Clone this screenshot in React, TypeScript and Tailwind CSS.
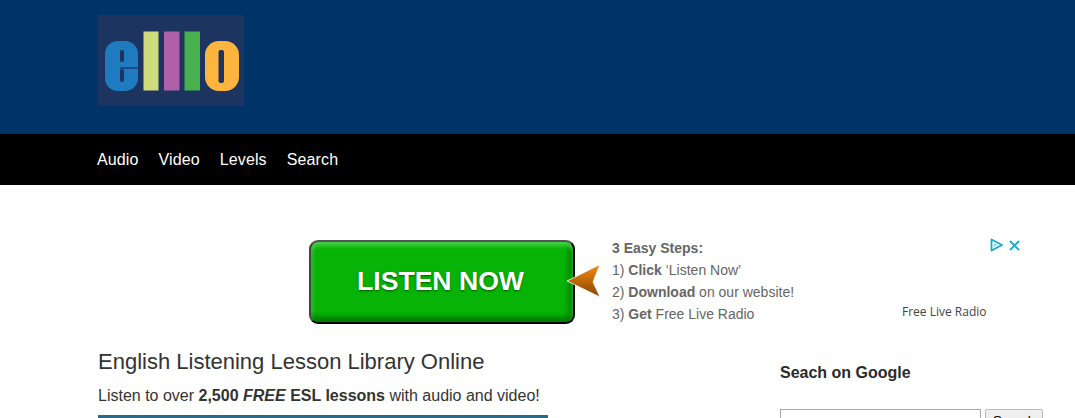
const navLinks = ['Audio', 'Video', 'Levels', 'Search']

function Logo() {
  return (
    <svg width="146" height="91" viewBox="0 0 146 91" className="block">
      <rect width="146" height="91" fill="#1d3461" />
      <rect x="7" y="26" width="33" height="50" rx="13" fill="#1f7bc0" />
      <rect x="22" y="35" width="4" height="12" rx="2" fill="#1d3461" />
      <rect x="22" y="54" width="4" height="13" rx="2" fill="#1d3461" />
      <rect x="22" y="52" width="18" height="2" fill="#1d4a80" />
      <rect x="45.5" y="16.5" width="15" height="59" fill="#cfdc7c" />
      <rect x="66" y="16.5" width="15.5" height="59" fill="#b060a8" />
      <rect x="86.5" y="16.5" width="15.5" height="59" fill="#48b04c" />
      <rect x="107" y="26" width="34" height="50" rx="14" fill="#fdb53d" />
      <rect x="120.5" y="35" width="5.5" height="33" rx="2" fill="#1d3461" />
    </svg>
  )
}

function Arrow() {
  return (
    <svg width="36" height="36" viewBox="0 0 36 36" className="block -ml-[9px] relative">
      <defs>
        <linearGradient id="arrowFill" x1="0" y1="0" x2="0" y2="1">
          <stop offset="0" stopColor="#f58a0a" />
          <stop offset="1" stopColor="#864408" />
        </linearGradient>
      </defs>
      <path d="M1 17 L34 0.5 L27 18 L34 33 Z" fill="url(#arrowFill)" stroke="#ffffff" strokeWidth="0.8" strokeLinejoin="round" />
    </svg>
  )
}

function AdChoices() {
  return (
    <div className="flex items-center gap-[5px]">
      <svg width="14" height="14" viewBox="0 0 14 14" fill="none">
        <path d="M1.5 1.5 L12 7 L1.5 12.5 Z" stroke="#19a8cf" strokeWidth="1.8" strokeLinejoin="round" />
        <path d="M4 5 L7.5 7 L4 9 Z" fill="#8fd6e8" />
      </svg>
      <svg width="11" height="11" viewBox="0 0 11 11" fill="none">
        <path d="M1 1 L10 10 M10 1 L1 10" stroke="#19a8cf" strokeWidth="1.8" />
      </svg>
    </div>
  )
}

export default function App() {
  return (
    <div className="h-[418px] overflow-hidden bg-white font-['Liberation_Sans',Arial,sans-serif] text-[#2b2b2b]">
      <header className="h-[134px] bg-[#003468] pl-[98px] pt-[15px]">
        <Logo />
      </header>

      <nav className="h-[51px] bg-black pl-[97px] flex items-center gap-[20px] text-white text-[16px] tracking-[0.12px]">
        {navLinks.map((link) => (
          <a key={link} href="#" className="leading-none">
            {link}
          </a>
        ))}
      </nav>

      <main>
        <section className="mt-[55px] h-[84px] pl-[309px] flex">
          <div className="w-[266px] h-[84px] rounded-[9px] border-2 border-t-[#555555] border-l-[#444444] border-r-black border-b-black bg-[#06b306] flex items-center justify-center pr-[3px] pb-[2px] shadow-[inset_0_4px_4px_#45cf45,inset_0_-5px_5px_#037a03,inset_3px_0_3px_#30c030,inset_-5px_0_5px_#048404]">
            <span className="text-white font-bold text-[26.6px] leading-none [text-shadow:0_1px_2px_#035a03]">
              LISTEN NOW
            </span>
          </div>
          <div className="pt-[24px]">
            <Arrow />
          </div>
          <div className="ml-[10px] w-[290px] text-[14px] leading-[22px] text-[#666666] -mt-[3px]">
            <p className="font-bold">3 Easy Steps:</p>
            <p>
              1) <b>Click</b> ‘Listen Now’
            </p>
            <p>
              2) <b>Download</b> on our website!
            </p>
            <p>
              3) <b>Get</b> Free Live Radio
            </p>
          </div>
          <div className="flex flex-col items-end w-[118px] -mt-[2px]">
            <AdChoices />
            <p className="mt-[52px] self-start font-['Open_Sans',sans-serif] text-[12px] leading-[16px] text-[#444444]">
              Free Live Radio
            </p>
          </div>
        </section>

        <section className="mt-[25px] pl-[98px] flex">
          <div className="w-[450px]">
            <h1 className="text-[22px] leading-[26px] font-normal text-[#333333]">English Listening Lesson Library Online</h1>
            <p className="mt-[12px] text-[16px] leading-[18px] text-[#333333]">
              Listen to over <b>2,500</b> <b><i>FREE</i></b> <b>ESL lessons</b> with audio and video!
            </p>
            <div className="mt-[10px] h-[10px] bg-[#2a6a86]" />
          </div>
          <aside className="ml-[232px] pt-[15px]">
            <h2 className="text-[16px] leading-[18px] font-bold">Seach on Google</h2>
            <div className="mt-[27px] flex gap-[4px]">
              <input className="w-[201px] h-[24px] border border-[#a9a9a9] bg-white" />
              <button className="w-[58px] h-[24px] border border-[#bbbbbb] rounded-[2px] bg-[#efefef] text-[13.3px] text-black">
                Search
              </button>
            </div>
          </aside>
        </section>
      </main>
    </div>
  )
}
